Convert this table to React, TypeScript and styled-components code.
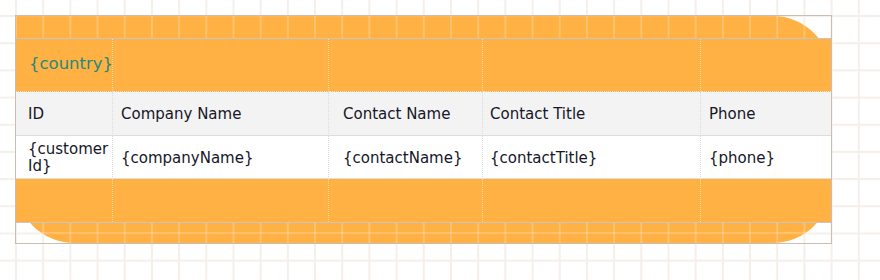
import React from "react";
import styled, { createGlobalStyle } from "styled-components";

const GlobalStyle = createGlobalStyle`
  html, body {
    margin: 0;
    padding: 0;
    background: #ffffff;
  }
`;

const ORANGE = "#ffb143";
const GRID = "27.2px";

const Canvas = styled.div`
  width: 880px;
  height: 280px;
  box-sizing: border-box;
  padding: 15px;
  background-color: #ffffff;
  background-image: linear-gradient(to right, #f5eee9 2px, transparent 2px),
    linear-gradient(to bottom, #f5eee9 2px, transparent 2px);
  background-size: ${GRID} ${GRID};
  background-position: 15px 15px;
  font-family: "DejaVu Sans", "Liberation Sans", sans-serif;
`;

const Frame = styled.div`
  width: 817px;
  box-sizing: border-box;
  border: 1px solid #cbbdb3;
`;

// orange backdrop, the canvas grid shows faintly through its strips
const Shape = styled.div`
  padding: 22px 0 20px;
  border-radius: 0 58px 58px 58px;
  background-color: ${ORANGE};
  background-image: linear-gradient(to right, rgba(255, 240, 225, 0.28) 2px, transparent 2px),
    linear-gradient(to bottom, rgba(255, 240, 225, 0.28) 2px, transparent 2px);
  background-size: ${GRID} ${GRID};
  background-position: -1px -1.6px;
`;

const Table = styled.div`
  display: grid;
  grid-template-columns: 97px 216px 154px 218px 130px;
  grid-template-rows: 53px 44px 43px 43px;
  border-top: 1px solid #c9c4c0;
  border-bottom: 1px solid #c9c4c0;
`;

type Tone = "band" | "head" | "body" | "foot";

const Cell = styled.div<{ $tone: Tone; $pad: number; $last?: boolean }>`
  box-sizing: border-box;
  display: flex;
  align-items: center;
  padding: 0 2px 0 ${(p) => p.$pad}px;
  background: ${(p) => (p.$tone === "head" ? "#f3f3f3" : p.$tone === "body" ? "#ffffff" : ORANGE)};
  border-right: ${(p) =>
    p.$last
      ? "none"
      : p.$tone === "band" || p.$tone === "foot"
      ? "1px dotted rgba(255, 255, 255, 0.5)"
      : "1px dotted #dcdcdc"};
  border-bottom: ${(p) =>
    p.$tone === "band"
      ? "1px dotted #e4e1dc"
      : p.$tone === "foot"
      ? "none"
      : "1px solid #dddddd"};
  color: #161628;
  font-size: 15px;
  line-height: 17px;
  overflow-wrap: anywhere;
`;

const Label = styled.span`
  padding-top: 2px;
`;

const Country = styled.span`
  color: #24897e;
  font-size: 16.5px;
  white-space: nowrap;
  margin-top: -3px;
`;

const pads = [12, 8, 14, 7, 8];
const headers = ["ID", "Company Name", "Contact Name", "Contact Title", "Phone"];
const fields: React.ReactNode[] = [
  <>
    {"{customer"}
    <wbr />
    {"Id}"}
  </>,
  "{companyName}",
  "{contactName}",
  "{contactTitle}",
  "{phone}",
];

export default function App() {
  return (
    <>
      <GlobalStyle />
      <Canvas>
        <Frame>
          <Shape>
            <Table>
              {pads.map((pad, i) => (
                <Cell key={`band-${i}`} $tone="band" $pad={i === 0 ? 13 : pad} $last={i === 4}>
                  {i === 0 && <Country>{"{country}"}</Country>}
                </Cell>
              ))}
              {headers.map((h, i) => (
                <Cell key={`head-${i}`} $tone="head" $pad={pads[i]} $last={i === 4}>
                  <Label>{h}</Label>
                </Cell>
              ))}
              {fields.map((f, i) => (
                <Cell key={`body-${i}`} $tone="body" $pad={pads[i]} $last={i === 4}>
                  <Label>{f}</Label>
                </Cell>
              ))}
              {pads.map((pad, i) => (
                <Cell key={`foot-${i}`} $tone="foot" $pad={pad} $last={i === 4} />
              ))}
            </Table>
          </Shape>
        </Frame>
      </Canvas>
    </>
  );
}
